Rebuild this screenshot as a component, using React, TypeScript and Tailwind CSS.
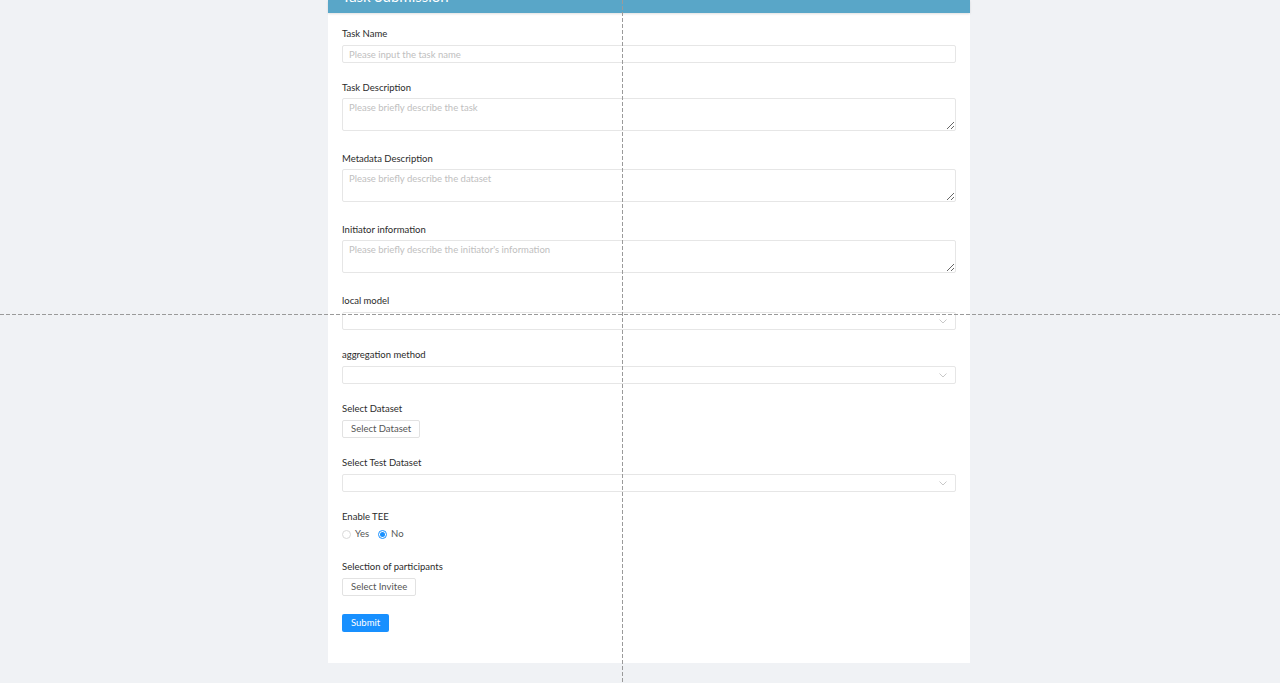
import React from 'react';

const font = { fontFamily: 'Lato, "Open Sans", sans-serif' };

function Label({ children, gap = 'mb-[4px]' }: { children: React.ReactNode; gap?: string }) {
  return <div className={`h-[14px] leading-[14px] text-[9.5px] text-[#2b2b2b] ${gap}`}>{children}</div>;
}

function Field({ label, children }: { label: string; children: React.ReactNode }) {
  return (
    <div className="mb-[18px]">
      <Label>{label}</Label>
      {children}
    </div>
  );
}

function AreaField({ label, placeholder }: { label: string; placeholder: string }) {
  return (
    <div className="mb-[21px]">
      <Label gap="mb-[3px]">{label}</Label>
      <textarea
        placeholder={placeholder}
        className="block w-full h-[33px] px-[6px] py-[2px] border border-[#e6e6e6] rounded-[2px] text-[9.5px] leading-[14px] text-[#333] placeholder:text-[#c0c0c0] outline-none resize-y"
        style={font}
      />
    </div>
  );
}

function TextInput({ placeholder }: { placeholder: string }) {
  return (
    <input
      placeholder={placeholder}
      className="block w-full h-[18px] px-[6px] border border-[#e6e6e6] rounded-[2px] text-[9.5px] text-[#333] placeholder:text-[#c0c0c0] outline-none"
      style={font}
    />
  );
}

function Select() {
  return (
    <div className="flex items-center justify-end w-full h-[18px] px-[8px] border border-[#e6e6e6] rounded-[2px] bg-white">
      <svg width="8" height="5" viewBox="0 0 8 5" fill="none">
        <path d="M0.5 0.5 L4 4 L7.5 0.5" stroke="#c8c8c8" strokeWidth="1" />
      </svg>
    </div>
  );
}

function GhostButton({ children }: { children: React.ReactNode }) {
  return (
    <div className="flex">
      <button
        className="flex items-center h-[18px] px-[8px] border border-[#e2e2e2] rounded-[2px] bg-white text-[9.5px] text-[#555]"
        style={font}
      >
        {children}
      </button>
    </div>
  );
}

export default function App() {
  return (
    <div className="relative h-[683px] overflow-hidden bg-[#f0f2f5]" style={font}>
      <div className="pl-[328px]">
        <div className="w-[642px] bg-white">
          <div className="h-[13px] overflow-hidden bg-[#59a6c8] shadow-[0_1px_2px_rgba(0,0,0,0.12)] px-[14px]">
            <div className="-mt-[14px] text-[15px] leading-[20px] text-white">Task Submission</div>
          </div>
          <div className="px-[14px] pt-[14px] pb-[31px]">
            <Field label="Task Name">
              <TextInput placeholder="Please input the task name" />
            </Field>
            <AreaField label="Task Description" placeholder="Please briefly describe the task" />
            <AreaField label="Metadata Description" placeholder="Please briefly describe the dataset" />
            <AreaField label="Initiator information" placeholder="Please briefly describe the initiator's information" />
            <Field label="local model">
              <Select />
            </Field>
            <Field label="aggregation method">
              <Select />
            </Field>
            <Field label="Select Dataset">
              <GhostButton>Select Dataset</GhostButton>
            </Field>
            <Field label="Select Test Dataset">
              <Select />
            </Field>
            <div className="mb-[19px]">
              <Label>Enable TEE</Label>
              <div className="flex items-center h-[13px] text-[9.5px] text-[#555]">
                <span className="w-[9px] h-[9px] rounded-full border border-[#d9d9d9] bg-white" />
                <span className="ml-[4px]">Yes</span>
                <span className="ml-[9px] w-[9px] h-[9px] rounded-full border border-[#1890ff] bg-white flex items-center justify-center">
                  <span className="w-[5px] h-[5px] rounded-full bg-[#1890ff]" />
                </span>
                <span className="ml-[4px]">No</span>
              </div>
            </div>
            <div className="mb-[18px]">
              <Label>Selection of participants</Label>
              <GhostButton>Select Invitee</GhostButton>
            </div>
            <div className="flex">
              <button
                className="flex items-center h-[18px] px-[9px] rounded-[2px] bg-[#1890ff] text-white text-[9.5px]"
                style={font}
              >
                Submit
              </button>
            </div>
          </div>
        </div>
      </div>
      <svg className="absolute inset-0 pointer-events-none" width="1280" height="683">
        <line x1="622.5" y1="0" x2="622.5" y2="683" stroke="#9a9a9a" strokeWidth="1" strokeDasharray="4 2" />
        <line x1="0" y1="314.5" x2="1280" y2="314.5" stroke="#9a9a9a" strokeWidth="1" strokeDasharray="4 2" />
      </svg>
    </div>
  );
}
